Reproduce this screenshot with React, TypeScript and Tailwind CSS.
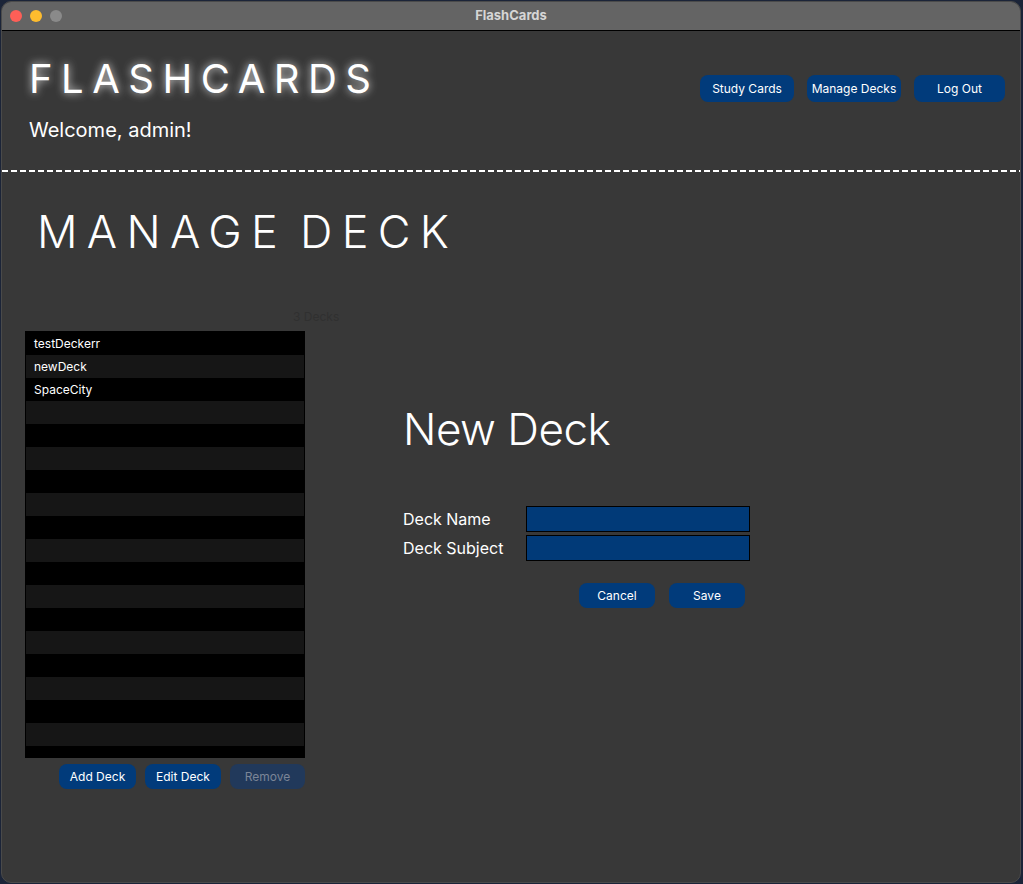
import React from "react";

const decks = ["testDeckerr", "newDeck", "SpaceCity"];

const Btn = ({ label, w, h = "h-[25px]", disabled = false }: { label: string; w: string; h?: string; disabled?: boolean }) => (
  <button
    className={`${w} ${h} rounded-[8px] text-[12px] ${
      disabled ? "bg-[#21395b] text-[#7b8597]" : "bg-[#013b7b] text-white"
    }`}
  >
    {label}
  </button>
);

export default function App() {
  const rows = Array.from({ length: 19 });
  return (
    <div className="h-[884px] w-[1023px] bg-[#1b2438] pt-[1px] pl-[1px] font-['Inter',sans-serif]">
      <div className="w-[1020px] h-[882px] rounded-[10px] overflow-hidden border border-[#4a4a4a] flex flex-col bg-[#383838]">
        {/* title bar */}
        <div className="h-[29px] shrink-0 bg-[#646464] border-b border-black flex items-center relative">
          <div className="flex gap-[8px] pl-[8px]">
            <span className="w-[12px] h-[12px] rounded-full bg-[#fe5f57]" />
            <span className="w-[12px] h-[12px] rounded-full bg-[#febc2e]" />
            <span className="w-[12px] h-[12px] rounded-full bg-[#8a8a8a]" />
          </div>
          <div className="absolute inset-0 flex items-center justify-center text-[13px] font-bold text-[#d6d6d6]">
            FlashCards
          </div>
        </div>

        {/* header */}
        <div className="h-[139px] shrink-0 flex justify-between pl-[27px] pr-[15px]">
          <div className="pt-[28px]">
            <h1 className="text-[40px] leading-none tracking-[8.5px] text-white [text-shadow:0_0_8px_rgba(255,255,255,0.85)]">
              FLASHCARDS
            </h1>
            <p className="mt-[21px] text-[20px] leading-none text-white">Welcome, admin!</p>
          </div>
          <div className="flex gap-[13px] pt-[44px]">
            <Btn label="Study Cards" w="w-[94px]" h="h-[27px]" />
            <Btn label="Manage Decks" w="w-[94px]" h="h-[27px]" />
            <Btn label="Log Out" w="w-[91px]" h="h-[27px]" />
          </div>
        </div>
        <div className="h-[2px] shrink-0 bg-[repeating-linear-gradient(90deg,#ffffff_0_6px,transparent_6px_9px)]" />

        {/* main */}
        <div className="px-[23px]">
          <h2 className="mt-[37px] ml-[12px] text-[45px] leading-none font-light tracking-[9.3px] [word-spacing:-9px] text-white">
            MANAGE DECK
          </h2>
          <div className="flex mt-[55px]">
            <div className="w-[280px] shrink-0">
              <div className="ml-[268px] h-[16px] text-[12px] leading-[16px] text-[#303030] whitespace-nowrap">
                3 Decks
              </div>
              <div className="mt-[6px] h-[427px] border border-black bg-black overflow-hidden">
                {rows.map((_, i) => (
                  <div
                    key={i}
                    className={`h-[23px] flex items-center pl-[8px] text-[12px] text-white ${
                      i % 2 === 0 ? "bg-black" : "bg-[#161616]"
                    }`}
                  >
                    {decks[i] ?? ""}
                  </div>
                ))}
              </div>
              <div className="mt-[6px] flex justify-end gap-[9px]">
                <Btn label="Add Deck" w="w-[77px]" />
                <Btn label="Edit Deck" w="w-[76px]" />
                <Btn label="Remove" w="w-[75px]" disabled />
              </div>
            </div>

            <div className="ml-[98px]">
              <h3 className="mt-[98px] text-[44px] leading-none font-light tracking-[-0.5px] text-white">New Deck</h3>
              <div className="mt-[55px] flex flex-col gap-[3px]">
                <div className="flex items-center">
                  <span className="w-[123px] text-[16px] text-white">Deck Name</span>
                  <div className="w-[224px] h-[26px] bg-[#013a78] border border-black" />
                </div>
                <div className="flex items-center">
                  <span className="w-[123px] text-[16px] text-white">Deck Subject</span>
                  <div className="w-[224px] h-[26px] bg-[#013a78] border border-black" />
                </div>
              </div>
              <div className="mt-[22px] ml-[176px] flex gap-[14px]">
                <Btn label="Cancel" w="w-[76px]" />
                <Btn label="Save" w="w-[76px]" />
              </div>
            </div>
          </div>
        </div>
      </div>
    </div>
  );
}
